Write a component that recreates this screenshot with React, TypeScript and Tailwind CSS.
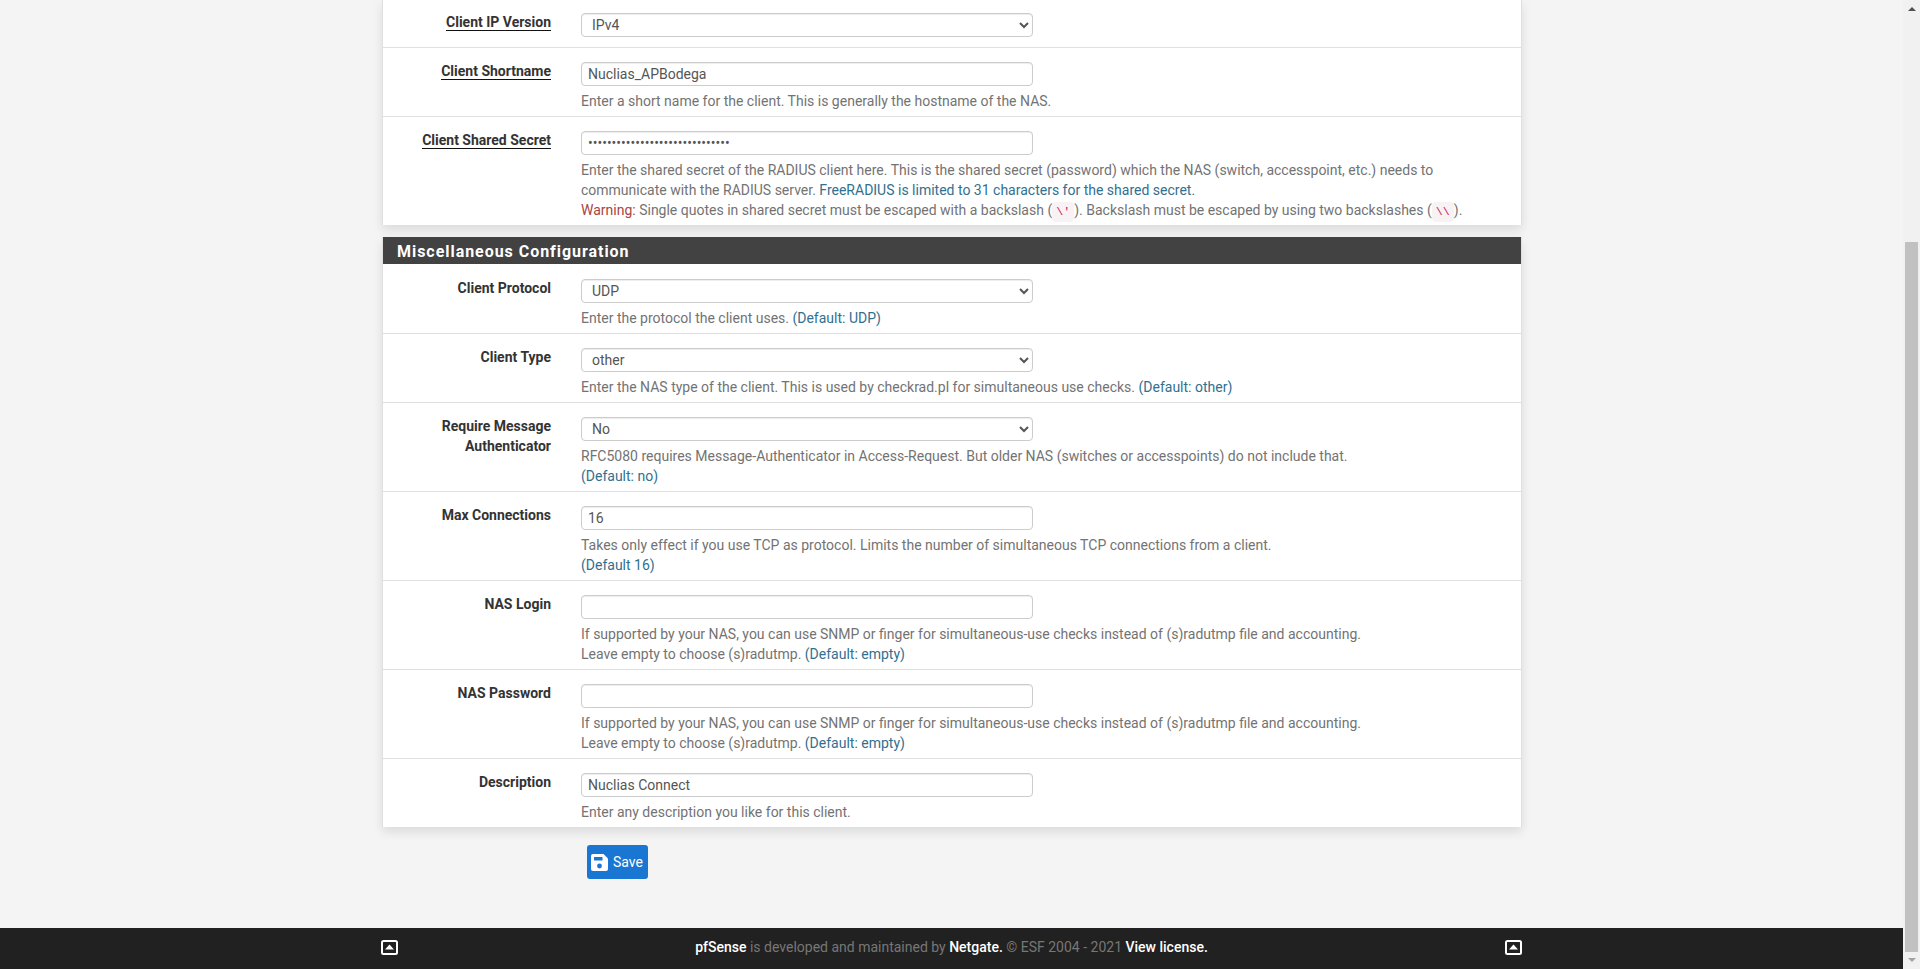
import React from 'react';

const Info = ({ children }: { children: React.ReactNode }) => <span className="text-[#31708f]">{children}</span>;

const Code = ({ children }: { children: React.ReactNode }) => (
  <code className="bg-[#f9f2f4] text-[#c7254e] rounded px-1 py-[3px] text-[11.7px] leading-none font-['Liberation_Mono',monospace]">{children}</code>
);

const Label = ({ children, required }: { children: React.ReactNode; required?: boolean }) => (
  <div className="w-[168px] shrink-0 -mt-px text-right font-bold text-[#333] text-[14px] leading-[20px]">
    {required ? <span className="border-b border-[#111]">{children}</span> : children}
  </div>
);

const Row = ({ label, required, first, children }: { label: React.ReactNode; required?: boolean; first?: boolean; children: React.ReactNode }) => (
  <div className={`flex pb-[5px] ${first ? 'pt-[15px]' : 'pt-[14px] border-t border-[#e0e0e0]'}`}>
    <Label required={required}>{label}</Label>
    <div className="ml-[30px] flex-1 min-w-0">{children}</div>
  </div>
);

const TextInput = ({ value, type = 'text' }: { value?: string; type?: string }) => (
  <input
    type={type}
    defaultValue={value}
    readOnly
    className="block w-[452px] h-[24px] px-[6px] bg-white border border-[#ccc] rounded shadow-[inset_0_1px_1px_rgba(0,0,0,0.075)] text-[14px] text-[#555] outline-none"
  />
);

const SelectInput = ({ value }: { value: string }) => (
  <select
    defaultValue={value}
    className="block w-[452px] h-[24px] px-[6px] bg-white border border-[#ccc] rounded shadow-[inset_0_1px_1px_rgba(0,0,0,0.075)] text-[14px] text-[#555] outline-none"
  >
    <option value={value}>{value}</option>
  </select>
);

const Help = ({ children }: { children: React.ReactNode }) => (
  <div className="mt-[5px] text-[14px] leading-[20px] text-[#737373] whitespace-nowrap">{children}</div>
);

const CaretSquare = () => (
  <svg width="17" height="15" viewBox="0 0 17 15" className="block">
    <rect x="1" y="1" width="15" height="13" rx="1.5" fill="none" stroke="#fff" strokeWidth="2" />
    <path d="M8.5 4.5 L13 9.5 H4 Z" fill="#fff" />
  </svg>
);

const SaveIcon = () => (
  <svg width="17" height="17" viewBox="0 0 17 17" className="block shrink-0">
    <path d="M2 0 H12.5 L17 4.5 V15 a2 2 0 0 1 -2 2 H2 a2 2 0 0 1 -2 -2 V2 a2 2 0 0 1 2 -2 Z" fill="#fff" />
    <rect x="3" y="3" width="8.5" height="3.5" fill="#1976d2" />
    <circle cx="8.5" cy="12" r="2.4" fill="#1976d2" />
  </svg>
);

export default function App() {
  return (
    <div className="flex h-[969px] overflow-hidden bg-[#f4f4f4] font-['Roboto',sans-serif]">
      <div className="flex-1 min-w-0 flex flex-col">
        <main className="flex-1 pl-[382px] pr-[381px]">
          {/* RADIUS client panel (scrolled, top is cut off) */}
          <section className="bg-white border-x border-[#e0e0e0] shadow-[0_5px_10px_rgba(0,0,0,0.1)]">
            <div className="flex pt-[13px] pb-[10px]">
              <Label required>Client IP Version</Label>
              <div className="ml-[30px]">
                <SelectInput value="IPv4" />
              </div>
            </div>
            <Row label="Client Shortname" required>
              <TextInput value="Nuclias_APBodega" />
              <Help>Enter a short name for the client. This is generally the hostname of the NAS.</Help>
            </Row>
            <Row label="Client Shared Secret" required>
              <TextInput type="password" value="abcdefghijklmnopqrstuvwxyz0123" />
              <Help>
                Enter the shared secret of the RADIUS client here. This is the shared secret (password) which the NAS (switch, accesspoint, etc.) needs to
                <br />
                communicate with the RADIUS server. <Info>FreeRADIUS is limited to 31 characters for the shared secret.</Info>
                <br />
                <span className="text-[#a94442]">Warning:</span> Single quotes in shared secret must be escaped with a backslash (<Code>\'</Code>). Backslash must be escaped by using two backslashes (<Code>\\</Code>).
              </Help>
            </Row>
          </section>

          <section className="mt-[12px] bg-white border-x border-[#e0e0e0] shadow-[0_5px_10px_rgba(0,0,0,0.1)]">
            <h2 className="h-[27px] pl-[14px] pt-px bg-[#424242] text-white text-[16px] font-bold tracking-[0.96px] leading-[27px]">Miscellaneous Configuration</h2>
            <Row label="Client Protocol" first>
              <SelectInput value="UDP" />
              <Help>
                Enter the protocol the client uses. <Info>(Default: UDP)</Info>
              </Help>
            </Row>
            <Row label="Client Type">
              <SelectInput value="other" />
              <Help>
                Enter the NAS type of the client. This is used by checkrad.pl for simultaneous use checks. <Info>(Default: other)</Info>
              </Help>
            </Row>
            <Row label={<>Require Message<br />Authenticator</>}>
              <SelectInput value="No" />
              <Help>
                RFC5080 requires Message-Authenticator in Access-Request. But older NAS (switches or accesspoints) do not include that.
                <br />
                <Info>(Default: no)</Info>
              </Help>
            </Row>
            <Row label="Max Connections">
              <TextInput value="16" />
              <Help>
                Takes only effect if you use TCP as protocol. Limits the number of simultaneous TCP connections from a client.
                <br />
                <Info>(Default 16)</Info>
              </Help>
            </Row>
            <Row label="NAS Login">
              <TextInput />
              <Help>
                If supported by your NAS, you can use SNMP or finger for simultaneous-use checks instead of (s)radutmp file and accounting.
                <br />
                Leave empty to choose (s)radutmp. <Info>(Default: empty)</Info>
              </Help>
            </Row>
            <Row label="NAS Password">
              <TextInput type="password" />
              <Help>
                If supported by your NAS, you can use SNMP or finger for simultaneous-use checks instead of (s)radutmp file and accounting.
                <br />
                Leave empty to choose (s)radutmp. <Info>(Default: empty)</Info>
              </Help>
            </Row>
            <Row label="Description">
              <TextInput value="Nuclias Connect" />
              <Help>Enter any description you like for this client.</Help>
            </Row>
          </section>

          <div className="pl-[205px] pt-[18px]">
            <button className="flex items-center gap-[5px] w-[61px] h-[34px] pl-[4px] bg-[#1976d2] rounded-[3px] text-white text-[14px]">
              <SaveIcon />
              Save
            </button>
          </div>
        </main>

        {/* Footer */}
        <footer className="h-[41px] shrink-0 bg-[#212121] pl-[381px] pr-[381px] pb-[2px] flex items-center justify-between">
          <CaretSquare />
          <p className="text-[14px] text-[#777]">
            <span className="text-white font-medium">pfSense</span> is developed and maintained by <span className="text-white font-medium">Netgate.</span> © ESF 2004 - 2021 <span className="text-white font-medium">View license.</span>
          </p>
          <CaretSquare />
        </footer>
      </div>

      {/* Scrollbar */}
      <div className="w-[17px] shrink-0 bg-[#f1f1f1] flex flex-col items-center">
        <div className="mt-[7px] w-0 h-0 border-x-[4px] border-x-transparent border-b-[4px] border-b-[#505050]" />
        <div className="mt-[231px] w-[13px] h-[710px] bg-[#c1c1c1]" />
        <div className="mt-[6px] w-0 h-0 border-x-[4px] border-x-transparent border-t-[4px] border-t-[#a3a3a3]" />
      </div>
    </div>
  );
}
